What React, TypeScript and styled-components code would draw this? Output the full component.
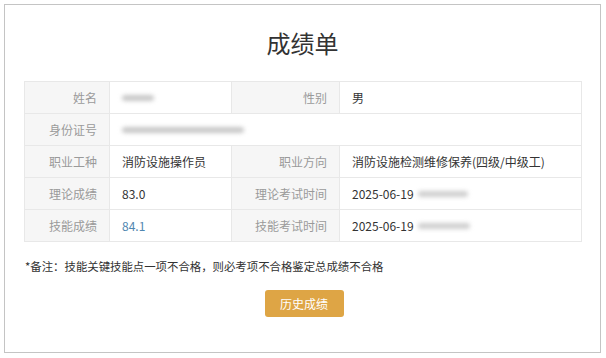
import React from "react";
import styled, { createGlobalStyle } from "styled-components";

const Global = createGlobalStyle`
  html, body { margin: 0; padding: 0; background: #fff; }
  body { font-family: "Noto Sans CJK SC", "Noto Sans", sans-serif; color: #333; }
`;

const Card = styled.div`
  box-sizing: border-box;
  margin: 4px 5px 0 4px;
  height: 349px;
  border: 1px solid #c4c4c4;
  display: flex;
  flex-direction: column;
  align-items: stretch;
`;

const Title = styled.h1`
  margin: 0;
  padding-top: 22px;
  height: 54px;
  font-size: 24px;
  line-height: 32px;
  font-weight: 400;
  text-align: center;
  color: #333;
`;

const Table = styled.div`
  margin: 0 18px 0 19px;
  display: grid;
  grid-template-columns: 85px 122px 108px 1fr;
  grid-auto-rows: 32px;
  border-top: 1px solid #e8e8e8;
  border-left: 1px solid #e8e8e8;
`;

const Cell = styled.div<{ $label?: boolean; $span?: number }>`
  box-sizing: border-box;
  display: flex;
  align-items: center;
  justify-content: ${(p) => (p.$label ? "flex-end" : "flex-start")};
  padding: ${(p) => (p.$label ? "0 12px 0 0" : "0 0 0 12px")};
  grid-column: span ${(p) => p.$span ?? 1};
  background: ${(p) => (p.$label ? "#f6f6f6" : "#fff")};
  color: ${(p) => (p.$label ? "#9a9a9a" : "#333")};
  font-size: 12px;
  border-right: 1px solid #e8e8e8;
  border-bottom: 1px solid #e8e8e8;
  white-space: nowrap;
`;

const Value = styled.span<{ $accent?: boolean }>`
  color: ${(p) => (p.$accent ? "#4f86b0" : "#333")};
`;

const Blur = styled.span<{ $w: number; $dark?: boolean }>`
  display: inline-block;
  width: ${(p) => p.$w}px;
  height: 6px;
  margin-left: ${(p) => (p.$dark ? 4 : 0)}px;
  background: ${(p) => (p.$dark ? "#cfcfcf" : "#c8c8c8")};
  border-radius: 3px;
  filter: blur(2px);
`;

const Note = styled.p`
  margin: 16px 0 0 20px;
  font-size: 11.4px;
  line-height: 16px;
  color: #333;
`;

const ButtonRow = styled.div`
  display: flex;
  justify-content: center;
  padding-top: 16px;
`;

const Button = styled.button`
  width: 79px;
  height: 27px;
  border: none;
  border-radius: 3px;
  background: #dea545;
  color: #fff;
  font-family: inherit;
  font-size: 12px;
  cursor: pointer;
  margin-left: 3px;
`;

export default function App() {
  return (
    <>
      <Global />
      <Card>
        <Title>成绩单</Title>
        <Table>
          <Cell $label>姓名</Cell>
          <Cell><Blur $w={32} /></Cell>
          <Cell $label>性别</Cell>
          <Cell>男</Cell>

          <Cell $label>身份证号</Cell>
          <Cell $span={3}><Blur $w={122} /></Cell>

          <Cell $label>职业工种</Cell>
          <Cell>消防设施操作员</Cell>
          <Cell $label>职业方向</Cell>
          <Cell>消防设施检测维修保养(四级/中级工)</Cell>

          <Cell $label>理论成绩</Cell>
          <Cell><Value>83.0</Value></Cell>
          <Cell $label>理论考试时间</Cell>
          <Cell>2025-06-19<Blur $w={50} $dark /></Cell>

          <Cell $label>技能成绩</Cell>
          <Cell><Value $accent>84.1</Value></Cell>
          <Cell $label>技能考试时间</Cell>
          <Cell>2025-06-19<Blur $w={52} $dark /></Cell>
        </Table>
        <Note>*备注：技能关键技能点一项不合格，则必考项不合格鉴定总成绩不合格</Note>
        <ButtonRow>
          <Button>历史成绩</Button>
        </ButtonRow>
      </Card>
    </>
  );
}
